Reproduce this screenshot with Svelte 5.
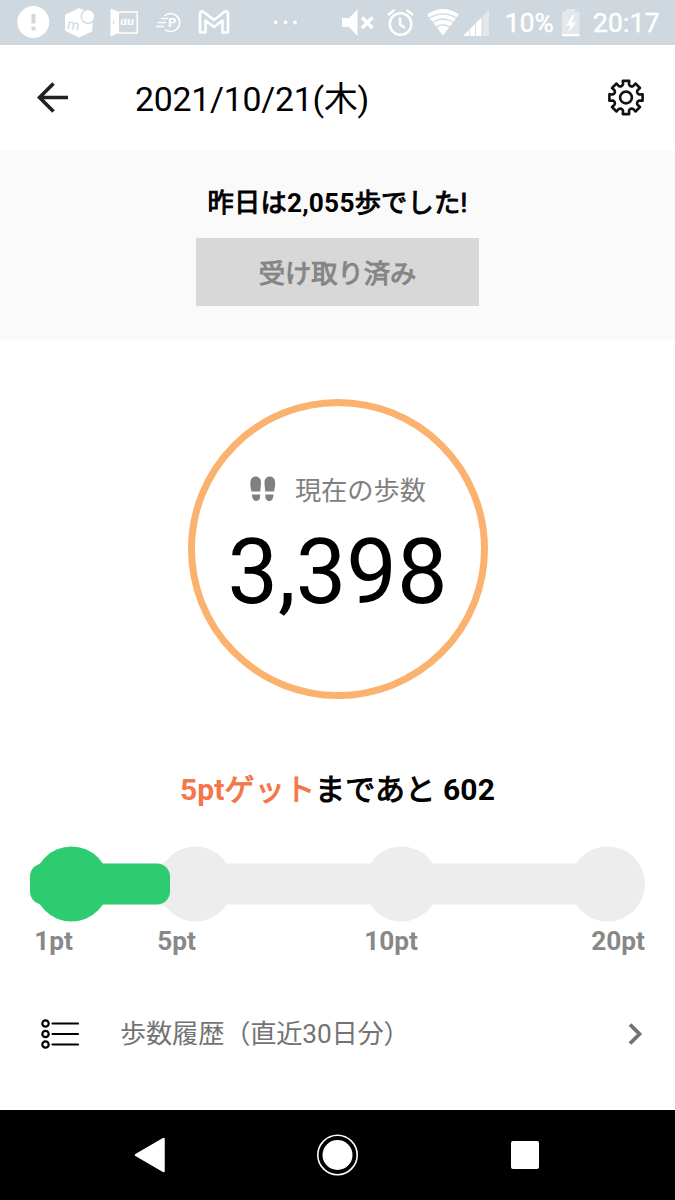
<script>
  const steps = 3398;
  const yesterday = 2055;
  const remaining = 602;

  const milestones = [
    { label: "1pt", x: 41.5, reached: true },
    { label: "5pt", x: 165.5, reached: false },
    { label: "10pt", x: 371.5, reached: false },
    { label: "20pt", x: 577.5, reached: false },
  ];

  const point = (r, a) => `${(r * Math.cos(a)).toFixed(2)} ${(r * Math.sin(a)).toFixed(2)}`;

  // eight teeth with hollow valleys between them
  function gearPath() {
    let d = "";
    for (let i = 0; i < 8; i++) {
      const a = (i * Math.PI) / 4;
      d += `${i ? "L" : "M"}${point(13.6, a - 0.22)} L${point(16.9, a - 0.19)} L${point(16.9, a + 0.19)} L${point(13.6, a + 0.22)} `;
      d += `Q${point(11, a + Math.PI / 8)} ${point(13.6, a + Math.PI / 4 - 0.22)} `;
    }
    return d + "Z";
  }
</script>

<div class="screen">
  <div class="status">
    <div class="notifications">
      <svg width="33" height="45" viewBox="17 0 33 45">
        <circle cx="33.3" cy="22" r="16" fill="#fff" />
        <path d="M33.5 14v9.5M33.5 26.5v4" stroke="#cfd8de" stroke-width="4" />
      </svg>
      <svg width="32" height="45" viewBox="64 0 32 45">
        <path d="M79 8.5L92 14.500V31L79 37L65.500 30.500V15Z" fill="#fff" stroke="#fff" stroke-linejoin="round" />
        <circle cx="88" cy="16.500" r="6.800" fill="#fff" stroke="#cfd8de" stroke-width="1.300" />
        <text x="66.500" y="28.500" class="mark" transform="rotate(10 66 28)">m</text>
      </svg>
      <svg width="30" height="45" viewBox="110 0 30 45">
        <path d="M110.500 8.500L119 12V33L110.500 36.500Z" fill="#fff" />
        <path d="M119 12H137.300V33H119" fill="none" stroke="#fff" stroke-width="1.500" />
        <path d="M113.500 20.500v4" stroke="#cfd8de" />
        <text x="120.500" y="25" class="au">au</text>
      </svg>
      <svg width="30" height="45" viewBox="154 0 30 45">
        <path d="M164.500 16A9 9 0 1 1 165 29.500M161 18.500h7M158 22.500h8M156 26.500h8" fill="none" stroke="#fff" stroke-width="1.600" />
        <text x="168" y="27.300" class="pay">P</text>
      </svg>
      <svg width="32" height="45" viewBox="198 0 32 45">
        <path d="M200 13.500Q200 11 203 11.500L214 20L225 11.500Q228 11 228 13.500V31.500Q228 32.500 227 32.500H222.500V20.500L214 27L205.500 20.500V32.500H201Q200 32.500 200 31.500Z" fill="none" stroke="#fff" stroke-width="2.600" stroke-linejoin="round" />
      </svg>
      <svg class="more" width="24" height="45" viewBox="274 0 24 45" fill="#fff">
        <circle cx="275.800" cy="22.500" r="1.900" />
        <circle cx="285.500" cy="22.500" r="1.900" />
        <circle cx="295" cy="22.500" r="1.900" />
      </svg>
    </div>
    <div class="system">
      <svg width="34" height="45" viewBox="341 0 34 45">
        <path d="M342 18h7l8.500-8.500v26.500l-8.500-9h-7z" fill="#fff" />
        <path d="M362 17.500l10.500 10.500M372.500 17.500l-10.500 10.500" stroke="#fff" stroke-width="3.400" />
      </svg>
      <svg class="alarm" width="27" height="45" viewBox="387 0 27 45" fill="none" stroke="#fff" stroke-width="2.500">
        <circle cx="400.500" cy="24" r="10.800" />
        <path d="M400 17.500v7l5 3.300M388 15l6.500-5M413 15l-6.500-5" />
      </svg>
      <svg class="wifi" width="33" height="45" viewBox="427 0 33 45">
        <path d="M427 14.500Q443 3.500 459 14.500L443 35.500Z" fill="#fff" />
        <path d="M429 18.300Q443 9.500 457 18.300M432.500 22.500Q443 15.500 453.500 22.500M436 27.200Q443 22.500 450 27.200" fill="none" stroke="#cfd8de" stroke-width="1.300" />
      </svg>
      <svg class="signal" width="27" height="45" viewBox="463 0 27 45">
        <path d="M482.500 16.500L489 10V36H482.500Z" fill="#e3e8ec" />
        <path d="M463 36L482 17V36Z" fill="#fff" />
        <path d="M469.500 28v8M475.500 22v14M482 16v20" stroke="#cfd8de" stroke-width=".8" />
      </svg>
      <span class="percent">10%</span>
      <svg class="battery" width="20" height="45" viewBox="561 0 20 45">
        <path d="M562 11.500h4v-2.500h9v2.500h4.500V36H562z" fill="#e3e8ec" />
        <path d="M562 34h17.500v2.300H562z" fill="#fff" />
        <path d="M573 14.500L566 25.500h4.500L568 33L576 22.500h-4.500L574.500 15z" fill="#fff" />
      </svg>
      <span class="clock">20:17</span>
    </div>
  </div>

  <header>
    <svg width="32" height="32" viewBox="0 0 32 32">
      <path d="M31 15.500H3M16.500 1.500L2.500 15.500L16.500 29.500" fill="none" stroke="#212121" stroke-width="3.700" />
    </svg>
    <h1>2021/10/21(木)</h1>
    <svg width="40" height="40" viewBox="-20 -19.500 40 40" fill="none" stroke="#111" stroke-width="2.600" stroke-linejoin="round">
      <path d={gearPath()} />
      <circle r="5.900" />
    </svg>
  </header>

  <section class="yesterday">
    <p><span class="jp">昨日は</span>{yesterday.toLocaleString("en-US")}<span class="jp">歩でした!</span></p>
    <button class="jp" disabled>受け取り済み</button>
  </section>

  <main>
    <div class="ring">
      <div class="caption">
        <svg width="26" height="26" viewBox="0 0 26 26" fill="#808080">
          <path d="M1.500 15.500C.5 11 0 8 .5 5C1 2 3 .5 5.700.5C9 .5 11 3 11 6.500C11 10 10.300 12 10.300 15.500ZM2 18.500H10.200C10.400 22.500 9 25 6.300 25C3.500 25 2 22.500 2 18.500Z" />
          <path d="M24 15.500C25 11 25.500 8 25 5C24.500 2 22.500.5 19.800.5C16.500.5 14.500 3 14.500 6.500C14.500 10 15.200 12 15.200 15.500ZM23.500 18.500H15.300C15.100 22.500 16.500 25 19.200 25C22 25 23.500 22.500 23.500 18.500Z" />
        </svg>
        <span>現在の歩数</span>
      </div>
      <div class="steps">{steps.toLocaleString("en-US")}</div>
    </div>

    <p class="goal"><span class="reward">5pt<span class="jp">ゲット</span></span><span class="jp">まであと</span> {remaining}</p>

    <div class="progress">
      <svg width="615" height="76" viewBox="0 0 615 76">
        <rect x="0" y="17.500" width="612" height="41" rx="14" fill="#ededed" />
        {#each milestones.filter((m) => !m.reached) as m}
          <circle cx={m.x} cy="38" r="37.500" fill="#ededed" />
        {/each}
        <rect x="0" y="17.500" width="140" height="41" rx="13" fill="#2ecc71" />
        {#each milestones.filter((m) => m.reached) as m}
          <circle cx={m.x} cy="38" r="37.500" fill="#2ecc71" />
        {/each}
      </svg>
      <div class="labels">
        {#each milestones as m}
          <span>{m.label}</span>
        {/each}
      </div>
    </div>

    <div class="history">
      <svg width="38" height="30" viewBox="0 0 38 30" fill="none" stroke="#000" stroke-width="2.200">
        {#each [4.5, 15, 25.500] as y}
          <circle cx="4.500" cy={y} r="3.200" />
          <path d="M11.500 {y}H37" stroke-linecap="round" />
        {/each}
      </svg>
      <span>歩数履歴（直近30日分）</span>
      <svg width="16" height="24" viewBox="0 0 16 24">
        <path d="M3 2.500L12.500 12L3 21.500" fill="none" stroke="#737373" stroke-width="3.800" />
      </svg>
    </div>
  </main>

  <nav>
    <svg width="32" height="38" viewBox="0 0 32 38">
      <path d="M2 19L29.500 3V35Z" fill="#fff" stroke="#fff" stroke-width="2.500" stroke-linejoin="round" />
    </svg>
    <svg width="42" height="42" viewBox="0 0 42 42">
      <circle cx="20.500" cy="21" r="19.700" fill="none" stroke="#fff" stroke-width="1.600" />
      <circle cx="20.500" cy="21" r="15" fill="#fff" />
    </svg>
    <svg width="30" height="30" viewBox="0 0 30 30">
      <rect x="1" y="1" width="28" height="28" rx="2" fill="#fff" />
    </svg>
  </nav>
</div>

<style>
  :global(body) {
    margin: 0;
    background: #fff;
  }
  .screen {
    width: 675px;
    height: 1200px;
    display: flex;
    flex-direction: column;
    overflow: hidden;
    font-family: Roboto, "Noto Sans CJK JP", sans-serif;
    font-size: 26.25px;
    color: #000;
    background: #fff;
  }
  svg {
    display: block;
    flex: none;
  }
  p, h1 {
    margin: 0;
  }
  /* thickened regular weight, lighter than the real bold kana */
  .jp {
    font-weight: 400;
    -webkit-text-stroke: 1px currentColor;
  }
  .status {
    height: 45px;
    display: flex;
    justify-content: space-between;
    background: #cfd8de;
    color: #fff;
  }
  .notifications, .system {
    display: flex;
    align-items: center;
  }
  .notifications {
    gap: 14px;
    padding-left: 17px;
  }
  .more {
    margin-left: 30px;
  }
  .mark {
    fill: #cfd8de;
    font-size: 14px;
  }
  .au {
    fill: #fff;
    font: italic bold 13px "Liberation Serif", serif;
  }
  .pay {
    fill: #fff;
    font-size: 13px;
    font-weight: bold;
  }
  .system {
    padding-right: 15px;
    line-height: 45px;
    -webkit-text-stroke: 0.5px #fff;
  }
  .alarm {
    margin-left: 12px;
  }
  .wifi {
    margin-left: 13px;
  }
  .signal {
    margin-left: 3px;
  }
  .percent {
    width: 56px;
    margin-left: 15px;
    padding-top: 2px;
  }
  .clock {
    width: 67px;
    margin-left: 12px;
    padding-top: 2px;
    letter-spacing: 0.3px;
  }
  header {
    height: 106px;
    box-sizing: border-box;
    display: flex;
    align-items: center;
    padding: 0 29px 0 37px;
  }
  h1 {
    flex: 1;
    padding: 3px 0 0 66px;
    font-size: 33.75px;
    font-weight: 400;
    line-height: 50px;
    letter-spacing: -0.2px;
  }
  .yesterday {
    height: 189px;
    box-sizing: border-box;
    padding-top: 32px;
    display: flex;
    flex-direction: column;
    align-items: center;
    background: #fafafa;
  }
  .yesterday p {
    font-weight: 700;
    line-height: 40px;
    letter-spacing: 0.2px;
  }
  button {
    width: 283px;
    height: 68px;
    margin-top: 15px;
    padding: 0;
    border: 0;
    background: #d8d8d8;
    color: #858585;
    font-family: inherit;
    font-size: 26.25px;
  }
  main {
    height: 770px;
    display: flex;
    flex-direction: column;
    align-items: center;
  }
  .ring {
    width: 300px;
    height: 300px;
    box-sizing: border-box;
    margin-top: 59px;
    border: 7.5px solid #fbb26f;
    border-radius: 50%;
    display: flex;
    flex-direction: column;
    align-items: center;
    padding-top: 65px;
  }
  .caption {
    display: flex;
    align-items: center;
    gap: 19px;
    padding-left: 1px;
    line-height: 38px;
    color: #808080;
  }
  .caption svg {
    margin-bottom: 4px;
  }
  .caption span {
    padding-top: 1px;
  }
  .steps {
    font-size: 90px;
    line-height: 106px;
    margin-top: 10px;
  }
  .goal {
    margin-top: 69px;
    font-size: 30px;
    font-weight: 700;
    line-height: 44px;
    letter-spacing: 0.15px;
  }
  .reward {
    color: #f4764b;
  }
  .progress {
    width: 615px;
    margin-top: 34px;
  }
  .labels {
    display: grid;
    grid-template-columns: 43px 123px 222px 227px;
    margin-top: 2px;
    text-align: right;
    font-weight: 700;
    line-height: 34px;
    color: #888;
  }
  .history {
    width: 675px;
    box-sizing: border-box;
    display: flex;
    align-items: center;
    margin-top: 53px;
    padding: 0 32px 0 41px;
    color: #737373;
    line-height: 44px;
  }
  .history span {
    flex: 1;
    padding: 1px 0 0 41px;
    letter-spacing: -0.2px;
  }
  nav {
    height: 90px;
    display: flex;
    align-items: center;
    justify-content: space-between;
    padding: 0 135px 0 134px;
    background: #000;
  }
</style>
